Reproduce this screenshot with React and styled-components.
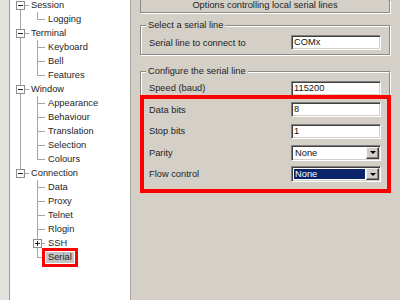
import React from 'react';
import styled, { createGlobalStyle } from 'styled-components';

const Global = createGlobalStyle`
  html, body { margin: 0; padding: 0; width: 400px; height: 300px; overflow: hidden; background: #d4d0c8; }
  body { font-family: "Liberation Sans", Arial, sans-serif; font-size: 9.3px; color: #1e1e1e; }
  * { box-sizing: border-box; }
`;

const LINE = '#a5a5a5';

const Window = styled.div`
  display: flex;
  width: 400px;
  height: 300px;
  overflow: hidden;
`;

const LeftEdge = styled.div`
  flex: none;
  width: 9px;
  background: #e4e2dd;
`;

const TreePane = styled.div`
  flex: none;
  width: 122px;
  background: #fff;
  border-left: 1px solid #9c9c9c;
  border-right: 1px solid #a9a7a1;
  overflow: hidden;
`;

const TreeList = styled.div`
  margin-top: -2px;
  display: flex;
  flex-direction: column;
`;

const TreeRow = styled.div`
  display: flex;
  align-items: center;
  height: 14px;
`;

function guideBg(v, x, hx, hl) {
  const imgs = [];
  const g = `linear-gradient(${LINE}, ${LINE})`;
  if (v === 'full') imgs.push(`${g} ${x}px 0 / 1px 14px no-repeat`);
  if (v === 'top') imgs.push(`${g} ${x}px 0 / 1px 7px no-repeat`);
  if (v === 'bottom') imgs.push(`${g} ${x}px 7px / 1px 7px no-repeat`);
  if (hl) imgs.push(`${g} ${hx}px 7px / ${hl}px 1px no-repeat`);
  return imgs.length ? imgs.join(', ') : 'none';
}

const Guide = styled.span`
  flex: none;
  display: flex;
  align-items: center;
  width: ${p => p.$w}px;
  height: 14px;
  background: ${p => guideBg(p.$v, p.$x, p.$hx, p.$hl)};
`;

const Expander = styled.span`
  width: 9px;
  height: 9px;
  margin-left: ${p => p.$ml}px;
  border: 1px solid #8e8e8e;
  background:
    linear-gradient(#222, #222) 1px 3px / 5px 1px no-repeat,
    ${p => (p.$plus ? 'linear-gradient(#222, #222) 3px 1px / 1px 5px no-repeat,' : '')}
    #fff;
`;

const NodeLabel = styled.span`
  padding: 0 2px;
  line-height: 11px;
  white-space: nowrap;
  background: ${p => (p.$selected ? '#c4c4c4' : 'transparent')};
  outline: ${p => (p.$selected ? '3px solid #f00' : 'none')};
  outline-offset: 1px;
`;

const Panel = styled.div`
  flex: 1;
  display: flex;
  flex-direction: column;
  padding: 0 10px 0 9px;
`;

const Header = styled.div`
  height: 13px;
  border: 1px solid #8c8a85;
  border-top: none;
  box-shadow: 1px 1px 0 #fff;
  text-align: center;
  line-height: 11px;
  white-space: nowrap;
`;

const Group = styled.fieldset`
  margin: ${p => p.$mt}px 0 0;
  padding: 1px 0 ${p => p.$pb}px;
  min-width: 0;
  border: 1px solid #8c8a85;
  box-shadow: inset 1px 1px 0 #fff, 1px 1px 0 #fff;
`;

const Legend = styled.legend`
  margin-left: 5px;
  padding: 0 2px;
  line-height: 11px;
  background: #d4d0c8;
  white-space: nowrap;
`;

const Row = styled.div`
  display: flex;
  align-items: center;
  justify-content: space-between;
  height: ${p => p.$h}px;
  padding: 0 8px;
  white-space: nowrap;
`;

const Highlight = styled.div`
  position: relative;
  &::after {
    content: '';
    position: absolute;
    inset: -4px -2px -8px -1px;
    border: 4px solid #f00;
    pointer-events: none;
  }
`;

const TextBox = styled.div`
  width: 90px;
  height: 15px;
  background: #fff;
  border: 1px solid;
  border-color: #808080 #fff #fff #808080;
  box-shadow: inset 1px 1px 0 #404040, inset -1px -1px 0 #d4d0c8;
  padding-left: 2px;
  line-height: 13px;
  color: #111;
`;

const Combo = styled.div`
  display: flex;
  width: 90px;
  height: 16px;
  background: #fff;
  border: 1px solid;
  border-color: #808080 #fff #fff #808080;
  box-shadow: inset 1px 1px 0 #404040, inset -1px -1px 0 #d4d0c8;
  padding: 1px;
`;

const ComboValue = styled.div`
  flex: 1;
  margin: 1px 1px 1px 1px;
  padding-left: 1px;
  line-height: 10px;
  background: ${p => (p.$sel ? '#0a246a' : 'transparent')};
  color: ${p => (p.$sel ? '#fff' : '#111')};
`;

const ComboButton = styled.div`
  flex: none;
  width: 13px;
  display: flex;
  align-items: center;
  justify-content: center;
  background: #d4d0c8;
  border: 1px solid;
  border-color: #f4f4f4 #404040 #404040 #f4f4f4;
  box-shadow: inset -1px -1px 0 #808080;
`;

const Arrow = styled.span`
  width: 0;
  height: 0;
  border-left: 3px solid transparent;
  border-right: 3px solid transparent;
  border-top: 3px solid #000;
`;

const tree = [
  { label: 'Session', children: [{ label: 'Logging' }] },
  { label: 'Terminal', children: [{ label: 'Keyboard' }, { label: 'Bell' }, { label: 'Features' }] },
  {
    label: 'Window',
    children: [
      { label: 'Appearance' },
      { label: 'Behaviour' },
      { label: 'Translation' },
      { label: 'Selection' },
      { label: 'Colours' },
    ],
  },
  {
    label: 'Connection',
    children: [
      { label: 'Data' },
      { label: 'Proxy' },
      { label: 'Telnet' },
      { label: 'Rlogin' },
      { label: 'SSH', collapsed: true },
      { label: 'Serial', selected: true },
    ],
  },
];

function Tree() {
  const rows = [];
  tree.forEach((root, ri) => {
    const first = ri === 0;
    const last = ri === tree.length - 1;
    rows.push(
      <TreeRow key={root.label}>
        <Guide $w={19} $x={10} $v={first ? 'bottom' : last ? 'top' : 'full'} $hx={10} $hl={9}>
          <Expander $ml={6} />
        </Guide>
        <NodeLabel>{root.label}</NodeLabel>
      </TreeRow>
    );
    root.children.forEach((c, ci) => {
      const lastChild = ci === root.children.length - 1;
      rows.push(
        <TreeRow key={root.label + c.label}>
          <Guide $w={19} $x={10} $v={last ? 'none' : 'full'} />
          <Guide $w={17} $x={8} $v={lastChild ? 'top' : 'full'} $hx={8} $hl={8}>
            {c.collapsed && <Expander $ml={4} $plus />}
          </Guide>
          <NodeLabel $selected={c.selected}>{c.label}</NodeLabel>
        </TreeRow>
      );
    });
  });
  return <TreeList>{rows}</TreeList>;
}

export default function App() {
  return (
    <>
      <Global />
      <Window>
        <LeftEdge />
        <TreePane>
          <Tree />
        </TreePane>
        <Panel>
          <Header>Options controlling local serial lines</Header>
          <Group $mt={6.5} $pb={0.5}>
            <Legend>Select a serial line</Legend>
            <Row $h={22}>
              <span>Serial line to connect to</span>
              <TextBox>COMx</TextBox>
            </Row>
          </Group>
          <Group $mt={10.5} $pb={4}>
            <Legend>Configure the serial line</Legend>
            <Row $h={21.5}>
              <span>Speed (baud)</span>
              <TextBox>115200</TextBox>
            </Row>
            <Highlight>
              <Row $h={21.5}>
                <span>Data bits</span>
                <TextBox>8</TextBox>
              </Row>
              <Row $h={21.5}>
                <span>Stop bits</span>
                <TextBox>1</TextBox>
              </Row>
              <Row $h={21.5}>
                <span>Parity</span>
                <Combo>
                  <ComboValue>None</ComboValue>
                  <ComboButton><Arrow /></ComboButton>
                </Combo>
              </Row>
              <Row $h={21.5}>
                <span>Flow control</span>
                <Combo>
                  <ComboValue $sel>None</ComboValue>
                  <ComboButton><Arrow /></ComboButton>
                </Combo>
              </Row>
            </Highlight>
          </Group>
        </Panel>
      </Window>
    </>
  );
}
